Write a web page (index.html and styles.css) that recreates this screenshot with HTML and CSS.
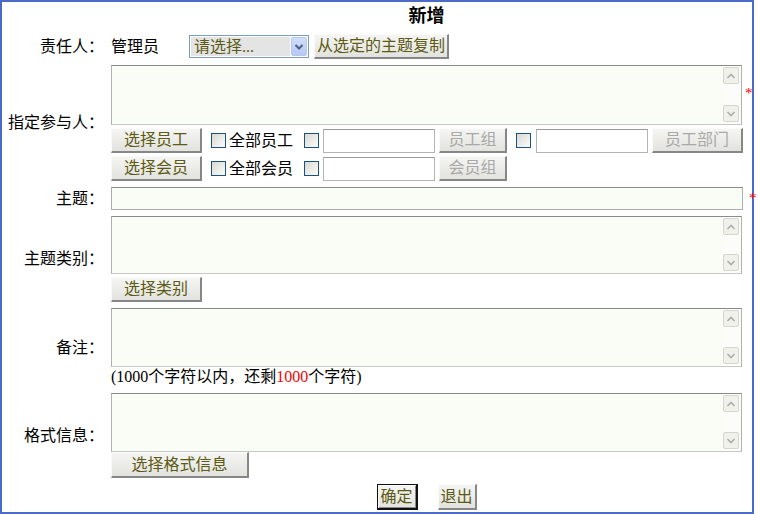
FILE: index.html
```html
<!DOCTYPE html>
<html lang="zh-CN">
  <head>
    <meta charset="UTF-8" />
    <title>新增</title>
    <link rel="stylesheet" href="styles.css">
  </head>
  <body>
    <div class="frame">
      <div class="form">
        <div></div>
        <div class="title">新增</div>

        <div class="label">责任人：</div>
        <div class="cell owner-row">
          <span class="owner">管理员</span>
          <div class="select">
            <span class="select-text">请选择...</span>
            <span class="select-arrow">
              <svg width="10" height="8" viewBox="0 0 10 8"><polyline points="1.5,2 5,5.5 8.5,2" fill="none" stroke="#4d6185" stroke-width="2"/></svg>
            </span>
          </div>
          <button class="btn btn-copy">从选定的主题复制</button>
        </div>

        <div class="label">指定参与人：</div>
        <div class="stack">
          <div class="field-line">
            <div class="memo h60">
              <textarea></textarea>
              <div class="vbar">
                <span class="arrow"><svg width="10" height="8" viewBox="0 0 10 8"><polyline points="1.5,6 5,2.5 8.5,6" fill="none" stroke="#aeaea6" stroke-width="1.6"/></svg></span>
                <span class="arrow"><svg width="10" height="8" viewBox="0 0 10 8"><polyline points="1.5,2 5,5.5 8.5,2" fill="none" stroke="#aeaea6" stroke-width="1.6"/></svg></span>
              </div>
            </div>
            <span class="req">*</span>
          </div>
          <div class="pick-row">
            <button class="btn btn-pick">选择员工</button>
            <input type="checkbox" class="chk chk-first" />
            <span class="chk-text">全部员工</span>
            <input type="checkbox" class="chk chk-second" />
            <input type="text" class="txt" />
            <button class="btn btn-group" disabled>员工组</button>
            <input type="checkbox" class="chk chk-third" />
            <input type="text" class="txt txt-dept" />
            <button class="btn btn-dept" disabled>员工部门</button>
          </div>
          <div class="pick-row">
            <button class="btn btn-pick">选择会员</button>
            <input type="checkbox" class="chk chk-first" />
            <span class="chk-text">全部会员</span>
            <input type="checkbox" class="chk chk-second" />
            <input type="text" class="txt" />
            <button class="btn btn-group" disabled>会员组</button>
          </div>
        </div>

        <div class="label">主题：</div>
        <div class="cell">
          <input type="text" class="subject" />
          <span class="req req-subject">*</span>
        </div>

        <div class="label">主题类别：</div>
        <div class="stack">
          <div class="memo h58">
            <textarea></textarea>
            <div class="vbar">
              <span class="arrow"><svg width="10" height="8" viewBox="0 0 10 8"><polyline points="1.5,6 5,2.5 8.5,6" fill="none" stroke="#aeaea6" stroke-width="1.6"/></svg></span>
              <span class="arrow"><svg width="10" height="8" viewBox="0 0 10 8"><polyline points="1.5,2 5,5.5 8.5,2" fill="none" stroke="#aeaea6" stroke-width="1.6"/></svg></span>
            </div>
          </div>
          <div><button class="btn btn-pick">选择类别</button></div>
        </div>

        <div class="label">备注：</div>
        <div class="stack tight">
          <div class="memo h59">
            <textarea></textarea>
            <div class="vbar">
              <span class="arrow"><svg width="10" height="8" viewBox="0 0 10 8"><polyline points="1.5,6 5,2.5 8.5,6" fill="none" stroke="#aeaea6" stroke-width="1.6"/></svg></span>
              <span class="arrow"><svg width="10" height="8" viewBox="0 0 10 8"><polyline points="1.5,2 5,5.5 8.5,2" fill="none" stroke="#aeaea6" stroke-width="1.6"/></svg></span>
            </div>
          </div>
          <div class="note">(1000个字符以内，还剩<span class="count">1000</span>个字符)</div>
        </div>

        <div class="label">格式信息：</div>
        <div class="stack tight">
          <div class="memo h59">
            <textarea></textarea>
            <div class="vbar">
              <span class="arrow"><svg width="10" height="8" viewBox="0 0 10 8"><polyline points="1.5,6 5,2.5 8.5,6" fill="none" stroke="#aeaea6" stroke-width="1.6"/></svg></span>
              <span class="arrow"><svg width="10" height="8" viewBox="0 0 10 8"><polyline points="1.5,2 5,5.5 8.5,2" fill="none" stroke="#aeaea6" stroke-width="1.6"/></svg></span>
            </div>
          </div>
          <div><button class="btn btn-format">选择格式信息</button></div>
        </div>

        <div></div>
        <div class="cell actions">
          <button class="btn btn-ok">确定</button>
          <button class="btn btn-back">退出</button>
        </div>
      </div>
    </div>
  </body>
</html>
```

FILE: styles.css
```css
body {
  margin: 0;
  background-color: #fff;
  font-family: "Liberation Serif", "Noto Sans CJK SC", serif;
  font-size: 16px;
  line-height: 20px;
  color: #000;
}
.frame {
  width: 754px;
  height: 514px;
  border: 2px solid #4a6cc8;
  box-sizing: border-box;
}
.form {
  display: grid;
  grid-template-columns: 102px 1fr;
  column-gap: 7px;
  row-gap: 6px;
}
.label {
  align-self: center;
  text-align: right;
}
.title {
  width: 631px;
  padding: 4px 0 2px;
  text-align: center;
  font-size: 18px;
  font-weight: bold;
}
.cell {
  display: flex;
  align-items: center;
}
.stack {
  display: flex;
  flex-direction: column;
  gap: 3px;
}
.stack.tight {
  gap: 0;
}
.field-line {
  display: flex;
  align-items: center;
}
.req {
  flex: none;
  margin: -4px 0 0 3px;
  color: #f00;
  font-size: 15px;
}
.req-subject {
  margin-left: 6px;
  margin-top: -2px;
}

/* select */
.select {
  display: flex;
  width: 120px;
  height: 23px;
  margin-left: 30px;
  padding: 1px;
  box-sizing: border-box;
  border: 1px solid #7f9db9;
  background-color: #fff;
}
.select-text {
  flex: 1;
  padding-left: 3px;
  margin-right: 1px;
  background-color: #e4e4e4;
  color: #5c5a14;
  line-height: 19px;
}
.select-arrow {
  width: 16px;
  display: flex;
  align-items: center;
  justify-content: center;
  box-sizing: border-box;
  border: 1px solid #b4c6f2;
  border-radius: 2px;
  background: linear-gradient(#d2defd, #b5c8f5);
}

/* buttons */
.btn {
  height: 25px;
  padding: 0;
  box-sizing: border-box;
  font: inherit;
  line-height: 20px;
  color: #5c5a14;
  background: linear-gradient(#f5f5f3, #e2e2de);
  border-style: solid;
  border-width: 1px 2px 2px 1px;
  border-color: #fafafa #878787 #878787 #fafafa;
  cursor: pointer;
}
.btn[disabled] {
  color: #a9a9a9;
  cursor: default;
}
.btn-copy {
  width: 135px;
  margin-left: 5px;
}
.btn-pick {
  width: 91px;
}
.btn-group {
  width: 68px;
  margin-left: 4px;
}
.btn-dept {
  width: 91px;
  margin-left: 4px;
}
.btn-format {
  width: 138px;
  height: 26px;
}
.actions {
  width: 631px;
  justify-content: center;
  gap: 20px;
}
.btn-ok,
.btn-back {
  height: 26px;
}
.btn-ok {
  width: 41px;
  border: 1px solid #111;
  border-width: 1px 2px 2px 1px;
  box-shadow: inset 1px 1px 0 #fafafa, inset -1px -1px 0 #8a8a8a;
}
.btn-back {
  width: 39px;
}

/* pick rows */
.pick-row {
  display: flex;
  align-items: center;
  height: 25px;
}
.chk {
  appearance: none;
  width: 15px;
  height: 15px;
  margin: 0;
  box-sizing: border-box;
  border: 1px solid #1c5180;
  background: linear-gradient(135deg, #d9d9d3, #fbfbfb);
}
.chk-first {
  margin-left: 9px;
}
.chk-second {
  margin-left: 11px;
}
.chk-third {
  margin-left: 9px;
}
.chk-text {
  margin-left: 3px;
}
.txt {
  width: 112px;
  height: 24px;
  margin-left: 4px;
  box-sizing: border-box;
  border: 1px solid #b3b3b3;
  border-top-color: #9a9a9a;
  background-color: #fff;
}
.txt-dept {
  margin-left: 5px;
}
.subject {
  width: 632px;
  height: 23px;
  box-sizing: border-box;
  border: 1px solid #acacac;
  border-top-color: #8c8c8c;
  background-color: #f9fdf6;
}

/* memo boxes */
.memo {
  display: flex;
  flex: none;
  width: 631px;
  box-sizing: border-box;
  border: 1px solid #b0b0b0;
  border-top-color: #8a8a8a;
  border-bottom-color: #c8c8c8;
  background-color: #f9fdf6;
}
.memo textarea {
  flex: 1;
  border: 0;
  padding: 2px;
  background: transparent;
  resize: none;
  overflow: hidden;
  outline: none;
  font: inherit;
}
.vbar {
  width: 17px;
  display: flex;
  flex-direction: column;
  justify-content: space-between;
  padding: 1px 1px 2px 0;
  background-color: #fcfcfa;
}
.arrow {
  width: 16px;
  height: 17px;
  display: flex;
  align-items: center;
  justify-content: center;
  box-sizing: border-box;
  border: 1px solid #d6d6cf;
  border-radius: 2px;
  background-color: #f1f1ec;
}
.h60 {
  height: 60px;
}
.h58 {
  height: 58px;
}
.h59 {
  height: 59px;
}
.note {
  line-height: 20px;
}
.count {
  color: #f00;
}
```
